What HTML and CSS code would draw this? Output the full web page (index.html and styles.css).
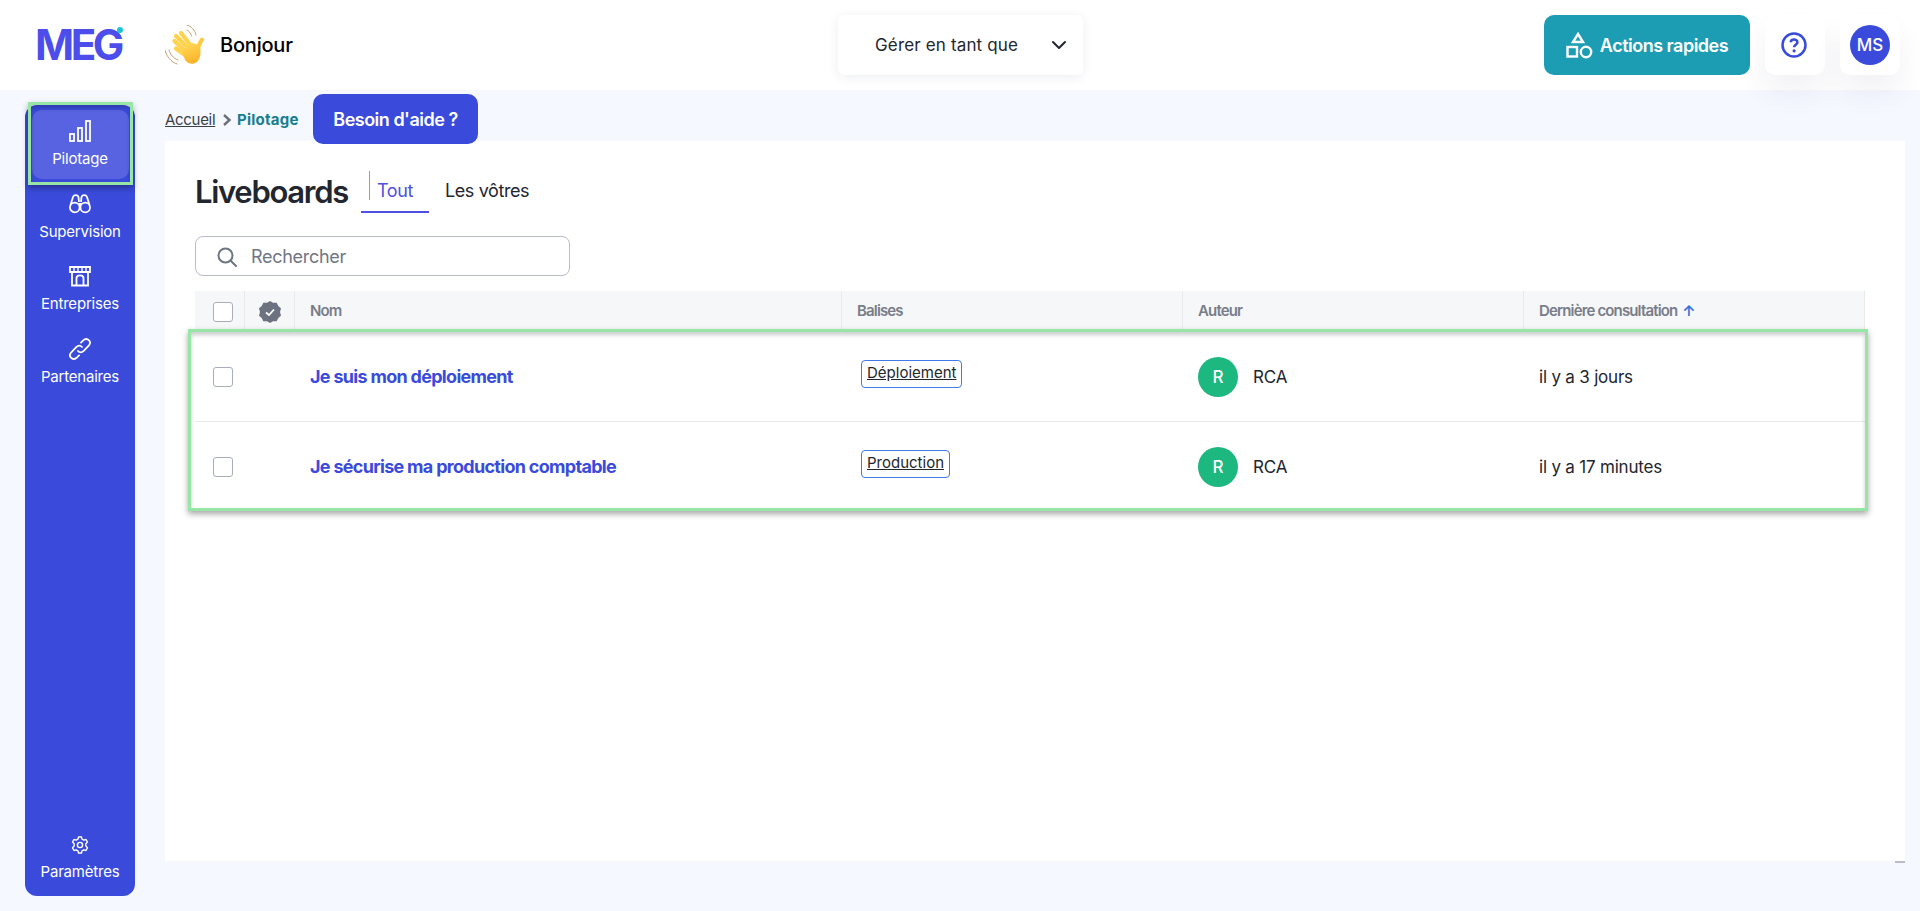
FILE: index.html
```html
<!DOCTYPE html>
<html lang="fr">
<head>
<meta charset="utf-8">
<title>Pilotage</title>
<link rel="stylesheet" href="styles.css">
</head>
<body>
<header class="topbar">
  <div class="brand">
    <span class="logo">MEG<i class="logo-dot"></i></span>
    <svg class="wave" viewBox="10 8 40 40" width="40" height="40">
      <defs>
        <linearGradient id="hand" x1="0" y1="0" x2="0.300" y2="1">
          <stop offset="0" stop-color="#FFDC5C"/>
          <stop offset="1" stop-color="#FBB42A"/>
        </linearGradient>
      </defs>
      <g fill="none" stroke="#FFD24D" stroke-width="4.200" stroke-linecap="round">
        <path d="M37 30 L26 16"/>
        <path d="M33 31 L21 19"/>
        <path d="M30 34 L19.500 24"/>
        <path d="M30 38 L21 31.500"/>
        <path d="M42 33 C44 29 45 25 47 22.500" stroke="#FFC83D" stroke-width="4"/>
      </g>
      <path d="M27 34 L37 26 L45 28 C46 34 46 41 42 45 C38 48 33 47 30 43 Z" fill="url(#hand)"/>
      <g fill="none" stroke="#B98A52" stroke-width=".8" stroke-linecap="round">
        <path d="M32 8 C36 9 40 13 41 18"/>
        <path d="M32 13 C34 14 36 16 36.500 19"/>
        <path d="M10 33 C11 39 16 45 22 47"/>
        <path d="M14 33 C15 37 18 41 23 43"/>
      </g>
    </svg>
    <span class="hello">Bonjour</span>
  </div>
  <div class="manage">
    <span>Gérer en tant que</span>
    <svg viewBox="0 0 16 16" width="16" height="16"><path d="M2 5 L8 11 L14 5" fill="none" stroke="#22262e" stroke-width="2" stroke-linecap="round" stroke-linejoin="round"/></svg>
  </div>
  <div class="actions">
    <button class="quick">
      <svg viewBox="0 0 27 27" width="27" height="27" fill="none" stroke="#fff" stroke-width="2.400"><path d="M12 2 L17 10 H7 Z"/><rect x="1.500" y="15" width="9.500" height="9.500"/><circle cx="20" cy="20" r="5.200"/></svg>
      Actions rapides
    </button>
    <div class="tile">
      <svg class="help-icon" viewBox="0 0 26 26" width="26" height="26"><circle cx="13" cy="13" r="11.500" fill="none" stroke="#3A4BDB" stroke-width="2.500"/><path d="M9.800 10.300 C9.800 6.600 16.400 6.600 16.400 10.300 C16.400 12.800 13.100 12.800 13.100 15.200" fill="none" stroke="#3A4BDB" stroke-width="2.600"/><circle cx="13.100" cy="18.800" r="1.600" fill="#3A4BDB"/></svg>
    </div>
    <div class="tile"><span class="me">MS</span></div>
  </div>
</header>

<div class="layout">
  <nav class="sidebar">
    <a class="nav-item active">
      <svg viewBox="0 0 22 22" width="22" height="22" fill="none" stroke="#fff" stroke-width="1.800"><rect x="1" y="14" width="4" height="7"/><rect x="9" y="8" width="4" height="13"/><rect x="17" y="1" width="4" height="20"/></svg>
      <span>Pilotage</span>
    </a>
    <a class="nav-item">
      <svg viewBox="0 0 22 22" width="22" height="22" fill="none" stroke="#fff" stroke-width="1.800"><circle cx="5.800" cy="14.500" r="4.800"/><circle cx="16.200" cy="14.500" r="4.800"/><path d="M1.500 12 L4 4 C5 1.500 8.500 1.500 9.500 4 L10 9 M20.500 12 L18 4 C17 1.500 13.500 1.500 12.500 4 L12 9 M9.500 11 H12.500"/></svg>
      <span>Supervision</span>
    </a>
    <a class="nav-item">
      <svg viewBox="0 0 22 22" width="22" height="22" fill="none" stroke="#fff" stroke-width="1.800"><path d="M1 2 H21 V7 H1 Z"/><path d="M5 2 V7 M9 2 V7 M13 2 V7 M17 2 V7" stroke-width="1.400"/><path d="M3 7 V20.500 H19 V7"/><path d="M7.500 20 V13 C7.500 9.500 14.500 9.500 14.500 13 V20"/></svg>
      <span>Entreprises</span>
    </a>
    <a class="nav-item">
      <svg viewBox="0 0 22 22" width="22" height="22" fill="none" stroke="#fff" stroke-width="1.800" stroke-linecap="round"><path d="M9 13 C10.500 14.800 13 14.800 14.500 13 L19.500 8 C21.500 5.800 21.500 3.800 20 2.300 C18.400 .7 16 .7 14.200 2.400 L12 4.600"/><path d="M13 9 C11.500 7.200 9 7.200 7.500 9 L2.500 14 C.5 16.200 .5 18.200 2 19.700 C3.600 21.300 6 21.300 7.800 19.600 L10 17.400"/></svg>
      <span>Partenaires</span>
    </a>
    <a class="nav-item settings">
      <svg viewBox="0 0 18 18" width="18" height="18" fill="none" stroke="#fff" stroke-width="1.400" stroke-linejoin="round"><path d="M7.500 1 H10.500 L11 3.200 L12.800 4.200 L15 3.500 L16.500 6.100 L14.800 7.700 V9.800 L16.500 11.900 L15 14.500 L12.800 13.800 L11 14.800 L10.500 17 H7.500 L7 14.800 L5.200 13.800 L3 14.500 L1.500 11.900 L3.200 9.800 V7.700 L1.500 6.100 L3 3.500 L5.200 4.200 L7 3.200 Z"/><circle cx="9" cy="9" r="2.600"/></svg>
      <span>Paramètres</span>
    </a>
    <div class="mark mark-nav"></div>
  </nav>

  <main class="main">
    <div class="crumbs">
      <a class="crumb-link">Accueil</a>
      <svg viewBox="0 0 10 14" width="10" height="14"><path d="M2 2 L7.500 7 L2 12" fill="none" stroke="#6b6f78" stroke-width="2.400"/></svg>
      <strong class="crumb-current">Pilotage</strong>
      <button class="help">Besoin d'aide ?</button>
    </div>

    <section class="card">
      <div class="title-row">
        <h1>Liveboards</h1>
        <div class="tabs">
          <span class="tab current">Tout</span>
          <span class="tab">Les vôtres</span>
        </div>
      </div>

      <div class="search">
        <svg viewBox="0 0 20 20" width="20" height="20" fill="none" stroke="#6F7683" stroke-width="2"><circle cx="8.500" cy="8.500" r="7"/><path d="M13.500 13.500 L19 19" stroke-linecap="round"/></svg>
        <span>Rechercher</span>
      </div>

      <div class="table">
        <div class="row head">
          <div class="cell"><span class="check"></span></div>
          <div class="cell">
            <svg viewBox="0 0 22 22" width="22" height="22"><path d="M11 0 L14 1.800 L17.700 1.700 L19.300 5 L22 7.300 L21 11 L22 14.700 L19.300 17 L17.700 20.300 L14 20.200 L11 22 L8 20.200 L4.300 20.300 L2.700 17 L0 14.700 L1 11 L0 7.300 L2.700 5 L4.300 1.700 L8 1.800 Z" fill="#6C7280"/><path d="M7 11.500 L10 14 L15 8.500" fill="none" stroke="#fff" stroke-width="1.800"/></svg>
          </div>
          <div class="cell text">Nom</div>
          <div class="cell text">Balises</div>
          <div class="cell text">Auteur</div>
          <div class="cell text">Dernière consultation <span class="sort">↑</span></div>
        </div>
        <div class="body">
          <div class="row item">
            <div class="cell"><span class="check"></span></div>
            <div class="cell"></div>
            <div class="cell text"><a class="name">Je suis mon déploiement</a></div>
            <div class="cell text"><a class="tag">Déploiement</a></div>
            <div class="cell text author"><span class="avatar">R</span>RCA</div>
            <div class="cell text">il y a 3 jours</div>
          </div>
          <div class="row item">
            <div class="cell"><span class="check"></span></div>
            <div class="cell"></div>
            <div class="cell text"><a class="name">Je sécurise ma production comptable</a></div>
            <div class="cell text"><a class="tag">Production</a></div>
            <div class="cell text author"><span class="avatar">R</span>RCA</div>
            <div class="cell text">il y a 17 minutes</div>
          </div>
          <div class="mark mark-rows"></div>
        </div>
      </div>
    </section>
  </main>
</div>
</body>
</html>
```

FILE: styles.css
```css
* { box-sizing: border-box; }
html, body { margin: 0; height: 911px; overflow: hidden; }
body {
  background: #F5F8FF;
  font-family: Inter, "Noto Sans", sans-serif;
  color: #22262E;
  display: flex;
  flex-direction: column;
}
button { font: inherit; border: 0; cursor: pointer; }

.topbar {
  height: 90px;
  flex: none;
  background: #fff;
  display: grid;
  grid-template-columns: 838px 245px 1fr;
  align-items: center;
  position: relative;
}
.brand { display: flex; align-items: center; padding-left: 35px; }
.logo {
  position: relative;
  width: 130px;
  font-size: 42px;
  font-weight: 700;
  letter-spacing: -3.500px;
  color: #4D4DEB;
  line-height: 1;
}
.logo-dot {
  position: absolute;
  left: 82px;
  top: 3px;
  width: 6px;
  height: 6px;
  border-radius: 50%;
  background: #1CC4D6;
}
.wave { flex: none; }
.hello { margin-left: 15px; font-size: 20px; font-weight: 500; color: #000; letter-spacing: -.2px; }

.manage {
  height: 60px;
  background: #fff;
  box-shadow: 0 2px 12px rgba(30, 40, 90, .08);
  border-radius: 6px;
  display: flex;
  align-items: center;
  justify-content: space-between;
  padding: 0 16px 0 37px;
  font-size: 17px;
  font-weight: 400;
  letter-spacing: .15px;
}
.actions { display: flex; justify-content: flex-end; align-items: center; padding-right: 20px; gap: 15px; }
.quick {
  width: 206px;
  height: 60px;
  border-radius: 10px;
  background: #1C9DB3;
  color: #fff;
  font-size: 18px;
  font-weight: 600;
  letter-spacing: -.5px;
  display: flex;
  align-items: center;
  justify-content: center;
  gap: 7px;
}
.tile {
  width: 60px;
  height: 60px;
  background: #fff;
  border-radius: 10px;
  display: flex;
  align-items: center;
  justify-content: center;
  box-shadow: 0 18px 30px rgba(30, 40, 90, .06);
}
.help-icon { margin-right: 2px; }
.me {
  width: 40px;
  height: 40px;
  border-radius: 50%;
  background: #3A4BDB;
  color: #fff;
  font-size: 17px;
  font-weight: 500;
  display: flex;
  align-items: center;
  justify-content: center;
}

.layout { flex: 1; display: flex; min-height: 0; }

.sidebar {
  position: relative;
  width: 110px;
  height: 791px;
  margin: 15px 0 0 25px;
  background: #3A4BDB;
  border-radius: 12px;
  padding: 5px 0 0;
  display: flex;
  flex-direction: column;
  align-items: center;
  color: #fff;
}
.nav-item {
  width: 97px;
  height: 68.500px;
  margin-bottom: 4px;
  border-radius: 10px;
  display: flex;
  flex-direction: column;
  align-items: center;
  justify-content: center;
  gap: 7px;
  font-size: 15px;
  letter-spacing: -.2px;
}
.nav-item.active { background: #5763E0; }
.nav-item.settings { margin-top: auto; margin-bottom: 3px; gap: 8px; }

.mark {
  position: absolute;
  border: 3.500px solid #98E6A6;
  box-shadow: 0 3px 6px rgba(0, 0, 0, .35), inset 0 3px 4px rgba(0, 0, 0, .2);
  pointer-events: none;
}
.mark-nav { left: 3px; top: -3px; width: 105px; height: 83px; }
.mark-rows { left: -7px; right: -3px; top: -3px; height: 182px; }

.main { width: 1740px; margin-left: 30px; display: flex; flex-direction: column; }
.crumbs { height: 51px; flex: none; display: flex; align-items: center; font-size: 15px; padding-top: 8px; }
.crumb-link { text-decoration: underline; color: #3a3f48; letter-spacing: -.3px; width: 50px; }
.crumbs svg { margin: 0 5px 0 7px; }
.crumb-current { color: #177E8F; font-weight: 700; letter-spacing: .25px; width: 62px; white-space: nowrap; }
.help {
  position: relative;
  z-index: 1;
  align-self: flex-start;
  margin: -4px 0 0 14px;
  width: 165px;
  height: 50px;
  border-radius: 10px;
  background: #3A4BDB;
  color: #fff;
  font-size: 18px;
  font-weight: 600;
  letter-spacing: -.5px;
}

.card { position: relative; height: 720px; background: #fff; padding: 30px; }
.card::after {
  content: "";
  position: absolute;
  right: 0;
  bottom: -2px;
  width: 10px;
  height: 2px;
  background: #B8BCCB;
}
.title-row { display: flex; align-items: flex-start; height: 65px; }
h1 { margin: 1px 0 0; width: 166px; font-size: 31px; line-height: 40px; font-weight: 600; letter-spacing: -1.300px; color: #22262E; }
.tabs { display: flex; align-self: stretch; }
.tab { height: 42px; line-height: 32px; padding: 4px 15px 0 16px; font-size: 18px; letter-spacing: -.4px; }
.tab.current {
  position: relative;
  width: 68px;
  color: #4F50E0;
  border-bottom: 2px solid #4F50E0;
}
.tab.current::before {
  content: "";
  position: absolute;
  left: 8px;
  top: 0;
  height: 29px;
  border-left: 1px solid #9b9fa8;
}

.search {
  width: 375px;
  height: 40px;
  border: 1px solid #B8BCCB;
  border-radius: 8px;
  display: flex;
  align-items: center;
  gap: 14px;
  padding: 1px 0 0 21px;
  font-size: 18px;
  letter-spacing: -.3px;
  color: #6F7683;
}
.table { margin-top: 15px; width: 1670px; }
.row { display: grid; grid-template-columns: 50px 50px 547px 341px 341px 341px; align-items: stretch; }
.head { height: 41px; background: #F6F7F9; font-size: 15px; font-weight: 600; letter-spacing: -.85px; color: #787D89; }
.head .cell { display: flex; align-items: center; border-right: 1px solid #E8EAEE; padding-bottom: 2px; }
.head .cell:nth-child(2) { justify-content: center; padding-bottom: 0; }
.head .cell:first-child { padding: 0 0 0 18px; }
.sort { color: #2F6FE0; margin-left: 5px; }
.body { position: relative; }
.item { height: 90px; align-items: center; font-size: 17px; letter-spacing: -.2px; }
.item:first-child { padding-top: 1px; border-bottom: 1px solid #E9EAEE; }
.item .cell:first-child { display: flex; padding-left: 18px; }
.text { padding-left: 15px; }
.check { display: block; width: 20px; height: 20px; border: 1px solid #A9AEBB; border-radius: 3px; background: #fff; }
.name { display: block; margin-top: -2px; font-size: 18px; font-weight: 700; letter-spacing: -.7px; color: #3A4BDB; }
.tag {
  display: inline-block;
  margin: -6px 0 0 4px;
  height: 28px;
  line-height: 24px;
  padding: 0 5px;
  border: 1px solid #3F7BE8;
  border-radius: 4px;
  font-size: 15px;
  letter-spacing: 0;
  text-decoration: underline;
  color: #22262E;
  vertical-align: top;
}
.author { display: flex; align-items: center; gap: 15px; font-size: 17px; }
.avatar {
  width: 40px;
  height: 40px;
  border-radius: 50%;
  background: #1DB87F;
  color: #fff;
  font-size: 17px;
  font-weight: 500;
  display: flex;
  align-items: center;
  justify-content: center;
}
```
